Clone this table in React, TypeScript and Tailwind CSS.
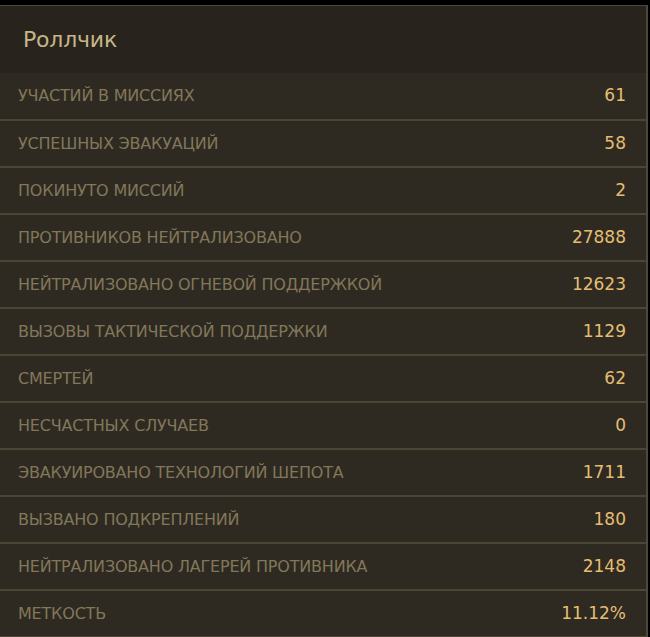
const stats: [string, string][] = [
  ['Участий в миссиях', '61'],
  ['Успешных эвакуаций', '58'],
  ['Покинуто миссий', '2'],
  ['Противников нейтрализовано', '27888'],
  ['Нейтрализовано огневой поддержкой', '12623'],
  ['Вызовы тактической поддержки', '1129'],
  ['Смертей', '62'],
  ['Несчастных случаев', '0'],
  ['Эвакуировано технологий шепота', '1711'],
  ['Вызвано подкреплений', '180'],
  ['Нейтрализовано лагерей противника', '2148'],
  ['Меткость', '11.12%'],
]

export default function App() {
  return (
    <div className="w-[650px] h-[637px] bg-black pt-[5px] font-['DejaVu_Sans',sans-serif]">
      <div className="w-[648px] border-t border-r-2 border-b border-[#4f4837] bg-[#2e2a21]">
        <div className="h-[67px] bg-[#28241d] flex items-center pl-[23px]">
          <h1 className="text-[22px] text-[#c6b687] tracking-[-0.2px]">Роллчик</h1>
        </div>
        {stats.map(([label, value], i) => (
          <div
            key={label}
            className={
              i === 0
                ? 'h-[46px] flex items-center justify-between pl-[18px] pr-[20px]'
                : 'h-[47px] flex items-center justify-between pl-[18px] pr-[20px] border-t-2 border-[#4b4535]'
            }
          >
            <span className="uppercase text-[16px] text-[#82775a] tracking-[-0.2px]">{label}</span>
            <span className="text-[17px] text-[#e4bd72]">{value}</span>
          </div>
        ))}
      </div>
    </div>
  )
}
